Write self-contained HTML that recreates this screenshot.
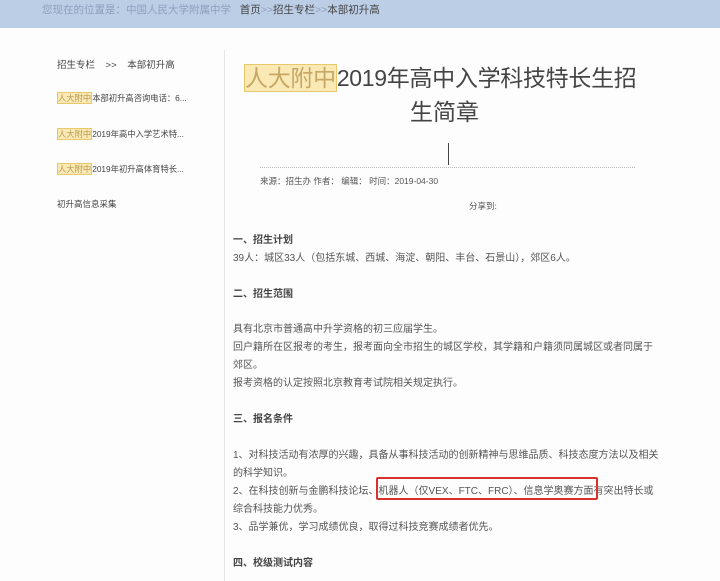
<!DOCTYPE html><html><head><meta charset="utf-8"><style>
body{margin:0;width:720px;height:581px;overflow:hidden;background:#fdfdfd;font-family:"Liberation Sans","Noto Sans CJK SC",sans-serif;color:#444;position:relative}
.a{position:absolute;white-space:nowrap}
.hl{background:#fbe9b5;border:1px solid #e8c96a;color:#b89a50}
.m{font-size:10px;color:#555;left:233px}
b{font-weight:bold;color:#444}
</style></head><body>
<div class="a" style="left:0;top:0;width:720px;height:28px;background:#bccde6"></div>
<div class="a" style="left:42px;top:2px;font-size:10.5px;color:#8ea0bd">您现在的位置是：中国人民大学附属中学 &nbsp; <span style="color:#444">首页</span>&gt;&gt;<span style="color:#444">招生专栏</span>&gt;&gt;<span style="color:#444">本部初升高</span></div>
<div class="a" style="left:224px;top:50px;width:1px;height:531px;background:#e6e6e6"></div>
<div class="a" style="left:57px;top:57px;font-size:9.5px;color:#444">招生专栏 &nbsp;&nbsp; &gt;&gt; &nbsp;&nbsp; 本部初升高</div>
<div class="a" style="left:57px;top:92px;font-size:8.3px;color:#444"><span class="hl">人大附中</span>本部初升高咨询电话：6...</div>
<div class="a" style="left:57px;top:128px;font-size:8.3px;color:#444"><span class="hl">人大附中</span>2019年高中入学艺术特...</div>
<div class="a" style="left:57px;top:163px;font-size:8.3px;color:#444"><span class="hl">人大附中</span>2019年初升高体育特长...</div>
<div class="a" style="left:57px;top:198px;font-size:8.5px;color:#444">初升高信息采集</div>
<div class="a" style="left:244px;top:59px;font-size:23px;color:#444;letter-spacing:-0.3px"><span class="hl" style="color:#c6a766">人大附中</span>2019年高中入学科技特长生招</div>
<div class="a" style="left:410px;top:93px;font-size:23px;color:#444">生简章</div>
<div class="a" style="left:448px;top:143px;width:1px;height:22px;background:#444"></div>
<div class="a" style="left:260px;top:167px;width:375px;border-top:1px dotted #bbb"></div>
<div class="a" style="left:260px;top:175px;font-size:8.5px;color:#555">来源：招生办 作者： 编辑： 时间：2019-04-30</div>
<div class="a" style="left:469px;top:200px;font-size:8.5px;color:#555">分享到:</div>
<div class="a m" style="top:231px"><b>一、招生计划</b></div>
<div class="a m" style="top:249px">39人：城区33人（包括东城、西城、海淀、朝阳、丰台、石景山），郊区6人。</div>
<div class="a m" style="top:285px"><b>二、招生范围</b></div>
<div class="a m" style="top:320px">具有北京市普通高中升学资格的初三应届学生。</div>
<div class="a m" style="top:338px">回户籍所在区报考的考生，报考面向全市招生的城区学校，其学籍和户籍须同属城区或者同属于</div>
<div class="a m" style="top:356px">郊区。</div>
<div class="a m" style="top:374px">报考资格的认定按照北京教育考试院相关规定执行。</div>
<div class="a m" style="top:410px"><b>三、报名条件</b></div>
<div class="a m" style="top:446px">1、对科技活动有浓厚的兴趣，具备从事科技活动的创新精神与思维品质、科技态度方法以及相关</div>
<div class="a m" style="top:464px">的科学知识。</div>
<div class="a m" style="top:482px">2、在科技创新与金鹏科技论坛、机器人（仅VEX、FTC、FRC）、信息学奥赛方面有突出特长或</div>
<div class="a" style="left:376px;top:477px;width:218px;height:19px;border:2px solid #d9322e;border-radius:2px"></div>
<div class="a m" style="top:500px">综合科技能力优秀。</div>
<div class="a m" style="top:518px">3、品学兼优，学习成绩优良，取得过科技竞赛成绩者优先。</div>
<div class="a m" style="top:554px"><b>四、校级测试内容</b></div>
</body></html>
